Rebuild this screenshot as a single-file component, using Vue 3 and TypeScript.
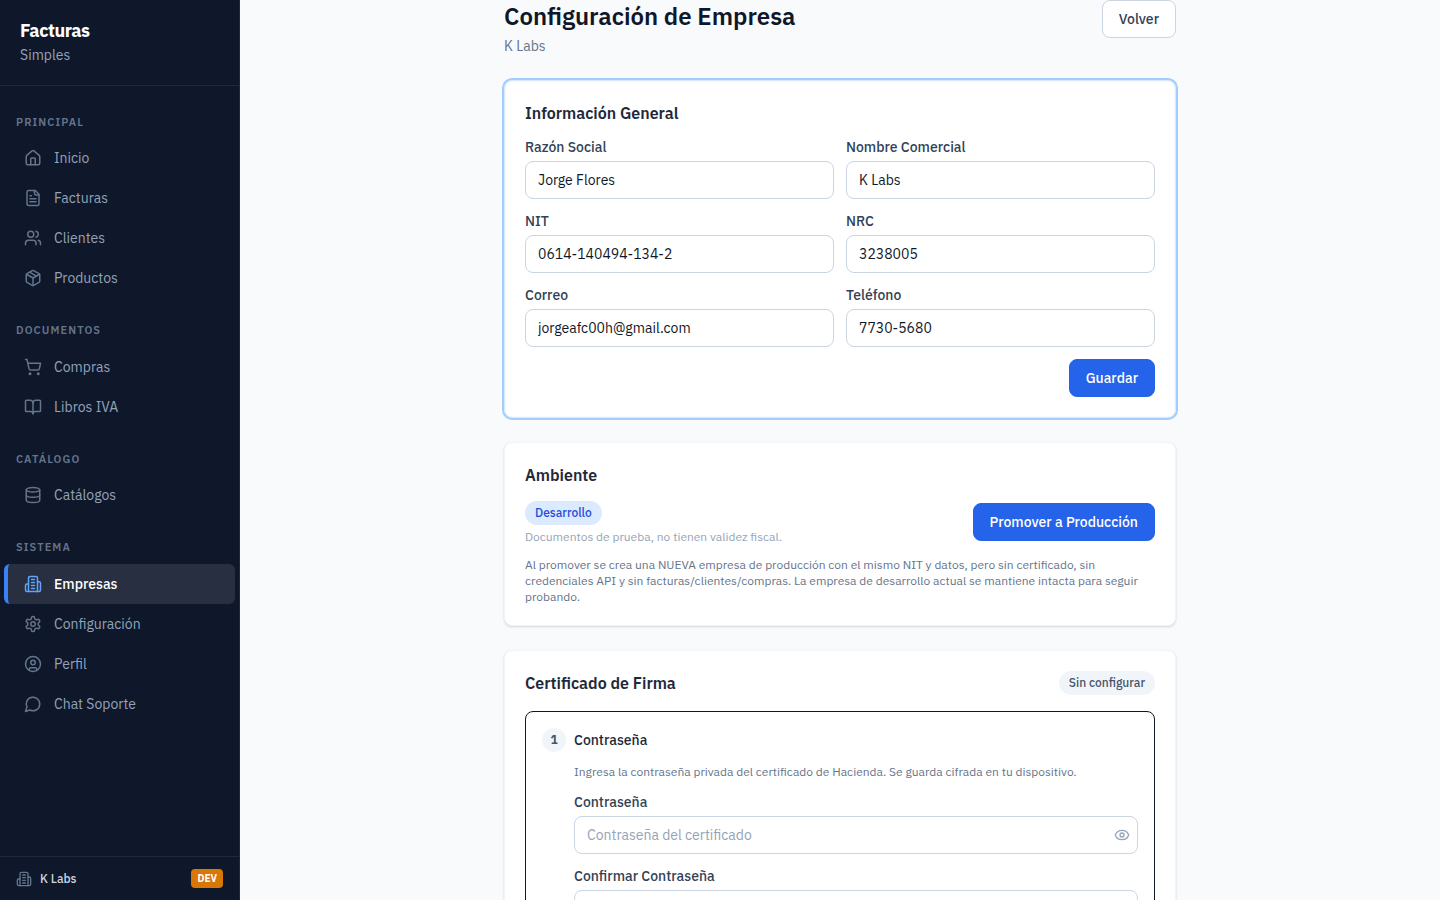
<script setup lang="ts">
import { ref } from 'vue'

interface NavItem {
  label: string
  icon: string
  active?: boolean
}
interface NavGroup {
  title: string
  items: NavItem[]
}

const icons: Record<string, string[]> = {
  home: [
    'M15 21v-8a1 1 0 0 0-1-1h-4a1 1 0 0 0-1 1v8',
    'M3 10a2 2 0 0 1 .709-1.528l7-5.999a2 2 0 0 1 2.582 0l7 5.999A2 2 0 0 1 21 10v9a2 2 0 0 1-2 2H5a2 2 0 0 1-2-2z',
  ],
  file: [
    'M15 2H6a2 2 0 0 0-2 2v16a2 2 0 0 0 2 2h12a2 2 0 0 0 2-2V7Z',
    'M14 2v4a2 2 0 0 0 2 2h4',
    'M10 9H8',
    'M16 13H8',
    'M16 17H8',
  ],
  users: [
    'M16 21v-2a4 4 0 0 0-4-4H6a4 4 0 0 0-4 4v2',
    'M5 7a4 4 0 1 0 8 0a4 4 0 1 0-8 0',
    'M22 21v-2a4 4 0 0 0-3-3.87',
    'M16 3.13a4 4 0 0 1 0 7.75',
  ],
  package: [
    'M11 21.73a2 2 0 0 0 2 0l7-4A2 2 0 0 0 21 16V8a2 2 0 0 0-1-1.73l-7-4a2 2 0 0 0-2 0l-7 4A2 2 0 0 0 3 8v8a2 2 0 0 0 1 1.73z',
    'M12 22V12',
    'M3.3 7 12 12l8.7-5',
    'M7.5 4.27l9 5.15',
  ],
  cart: [
    'M7 21a1 1 0 1 0 2 0a1 1 0 1 0-2 0',
    'M18 21a1 1 0 1 0 2 0a1 1 0 1 0-2 0',
    'M2.05 2.05h2l2.66 12.42a2 2 0 0 0 2 1.58h9.78a2 2 0 0 0 1.95-1.57l1.65-7.43H5.12',
  ],
  book: [
    'M12 7v14',
    'M3 18a1 1 0 0 1-1-1V4a1 1 0 0 1 1-1h5a4 4 0 0 1 4 4 4 4 0 0 1 4-4h5a1 1 0 0 1 1 1v13a1 1 0 0 1-1 1h-6a3 3 0 0 0-3 3 3 3 0 0 0-3-3z',
  ],
  database: [
    'M3 5a9 3 0 1 0 18 0a9 3 0 1 0-18 0',
    'M3 5v14a9 3 0 0 0 18 0V5',
    'M3 12a9 3 0 0 0 18 0',
  ],
  building: [
    'M6 22V4a2 2 0 0 1 2-2h8a2 2 0 0 1 2 2v18Z',
    'M6 12H4a2 2 0 0 0-2 2v6a2 2 0 0 0 2 2h2',
    'M18 9h2a2 2 0 0 1 2 2v9a2 2 0 0 1-2 2h-2',
    'M10 6h4',
    'M10 10h4',
    'M10 14h4',
    'M10 18h4',
  ],
  settings: [
    'M12.22 2h-.44a2 2 0 0 0-2 2v.18a2 2 0 0 1-1 1.73l-.43.25a2 2 0 0 1-2 0l-.15-.08a2 2 0 0 0-2.73.73l-.22.38a2 2 0 0 0 .73 2.73l.15.1a2 2 0 0 1 1 1.72v.51a2 2 0 0 1-1 1.74l-.15.09a2 2 0 0 0-.73 2.73l.22.38a2 2 0 0 0 2.73.73l.15-.08a2 2 0 0 1 2 0l.43.25a2 2 0 0 1 1 1.73V20a2 2 0 0 0 2 2h.44a2 2 0 0 0 2-2v-.18a2 2 0 0 1 1-1.73l.43-.25a2 2 0 0 1 2 0l.15.08a2 2 0 0 0 2.73-.73l.22-.39a2 2 0 0 0-.73-2.73l-.15-.08a2 2 0 0 1-1-1.74v-.5a2 2 0 0 1 1-1.74l.15-.09a2 2 0 0 0 .73-2.73l-.22-.38a2 2 0 0 0-2.73-.73l-.15.08a2 2 0 0 1-2 0l-.43-.25a2 2 0 0 1-1-1.73V4a2 2 0 0 0-2-2z',
    'M9 12a3 3 0 1 0 6 0a3 3 0 1 0-6 0',
  ],
  profile: [
    'M2 12a10 10 0 1 0 20 0a10 10 0 1 0-20 0',
    'M9 10a3 3 0 1 0 6 0a3 3 0 1 0-6 0',
    'M7 20.662V19a2 2 0 0 1 2-2h6a2 2 0 0 1 2 2v1.662',
  ],
  chat: ['M7.9 20A9 9 0 1 0 4 16.1L2 22Z'],
}

const groups: NavGroup[] = [
  {
    title: 'Principal',
    items: [
      { label: 'Inicio', icon: 'home' },
      { label: 'Facturas', icon: 'file' },
      { label: 'Clientes', icon: 'users' },
      { label: 'Productos', icon: 'package' },
    ],
  },
  {
    title: 'Documentos',
    items: [
      { label: 'Compras', icon: 'cart' },
      { label: 'Libros IVA', icon: 'book' },
    ],
  },
  { title: 'Catálogo', items: [{ label: 'Catálogos', icon: 'database' }] },
  {
    title: 'Sistema',
    items: [
      { label: 'Empresas', icon: 'building', active: true },
      { label: 'Configuración', icon: 'settings' },
      { label: 'Perfil', icon: 'profile' },
      { label: 'Chat Soporte', icon: 'chat' },
    ],
  },
]

const fields = ref([
  { id: 'razon', label: 'Razón Social', value: 'Jorge Flores', type: 'text' },
  { id: 'nombre', label: 'Nombre Comercial', value: 'K Labs', type: 'text' },
  { id: 'nit', label: 'NIT', value: '0614-140494-134-2', type: 'text' },
  { id: 'nrc', label: 'NRC', value: '3238005', type: 'text' },
  { id: 'correo', label: 'Correo', value: 'jorgeafc00h@gmail.com', type: 'email' },
  { id: 'telefono', label: 'Teléfono', value: '7730-5680', type: 'tel' },
])

const password = ref('')
const confirmation = ref('')
const showPassword = ref(false)
</script>

<template>
  <div class="app">
    <aside class="sidebar">
      <div class="brand">
        <div class="brand-name">Facturas</div>
        <div class="brand-sub">Simples</div>
      </div>
      <nav class="nav">
        <section v-for="group in groups" :key="group.title">
          <h2 class="nav-title">{{ group.title }}</h2>
          <a
            v-for="item in group.items"
            :key="item.label"
            href="#"
            class="nav-item"
            :class="{ active: item.active }"
          >
            <svg class="icon" viewBox="0 0 24 24" aria-hidden="true">
              <path v-for="d in icons[item.icon]" :key="d" :d="d" />
            </svg>
            <span>{{ item.label }}</span>
          </a>
        </section>
      </nav>
      <div class="company">
        <svg class="icon small" viewBox="0 0 24 24" aria-hidden="true">
          <path v-for="d in icons.building" :key="d" :d="d" />
        </svg>
        <span class="company-name">K Labs</span>
        <span class="env">DEV</span>
      </div>
    </aside>

    <main class="main">
      <div class="content">
        <header class="page-head">
          <div>
            <h1>Configuración de Empresa</h1>
            <p class="subtitle">K Labs</p>
          </div>
          <button type="button" class="btn secondary">Volver</button>
        </header>

        <form class="card highlighted" @submit.prevent>
          <h2 class="card-title">Información General</h2>
          <div class="grid">
            <div v-for="field in fields" :key="field.id" class="field">
              <label :for="field.id">{{ field.label }}</label>
              <input :id="field.id" v-model="field.value" :type="field.type" class="input" />
            </div>
          </div>
          <div class="actions">
            <button type="submit" class="btn primary">Guardar</button>
          </div>
        </form>

        <section class="card">
          <h2 class="card-title">Ambiente</h2>
          <div class="env-row">
            <div class="env-info">
              <span class="badge blue">Desarrollo</span>
              <p class="hint">Documentos de prueba, no tienen validez fiscal.</p>
            </div>
            <button type="button" class="btn primary">Promover a Producción</button>
          </div>
          <p class="note">
            Al promover se crea una NUEVA empresa de producción con el mismo NIT y datos, pero sin
            certificado, sin credenciales API y sin facturas/clientes/compras. La empresa de
            desarrollo actual se mantiene intacta para seguir probando.
          </p>
        </section>

        <section class="card">
          <div class="cert-head">
            <h2 class="card-title">Certificado de Firma</h2>
            <span class="badge gray">Sin configurar</span>
          </div>
          <form class="step" @submit.prevent>
            <div class="step-head">
              <span class="step-number">1</span>
              <h3>Contraseña</h3>
            </div>
            <div class="step-body">
              <p class="note">
                Ingresa la contraseña privada del certificado de Hacienda. Se guarda cifrada en tu
                dispositivo.
              </p>
              <div class="field">
                <label for="password">Contraseña</label>
                <div class="input-wrap">
                  <input
                    id="password"
                    v-model="password"
                    :type="showPassword ? 'text' : 'password'"
                    class="input"
                    placeholder="Contraseña del certificado"
                  />
                  <button
                    type="button"
                    class="eye"
                    aria-label="Mostrar contraseña"
                    @click="showPassword = !showPassword"
                  >
                    <svg viewBox="0 0 24 24" aria-hidden="true">
                      <path
                        d="M2.062 12.348a1 1 0 0 1 0-.696 10.75 10.75 0 0 1 19.876 0 1 1 0 0 1 0 .696 10.75 10.75 0 0 1-19.876 0"
                      />
                      <circle cx="12" cy="12" r="3" />
                    </svg>
                  </button>
                </div>
              </div>
              <div class="field">
                <label for="confirmation">Confirmar Contraseña</label>
                <input id="confirmation" v-model="confirmation" type="password" class="input" />
              </div>
            </div>
          </form>
        </section>
      </div>
    </main>
  </div>
</template>

<style>
body {
  margin: 0;
  background: #f8fafc;
}
</style>

<style scoped>
.app,
.app * {
  box-sizing: border-box;
}
.app {
  display: flex;
  height: 100vh;
  font-family: 'IBM Plex Sans', Roboto, 'Liberation Sans', sans-serif;
  font-size: 14px;
  line-height: 20px;
  color: #0f172a;
}
h1,
h2,
h3,
p {
  margin: 0;
}
button,
input {
  font: inherit;
}
.sidebar {
  display: flex;
  flex-direction: column;
  flex: 0 0 240px;
  background: #0f172a;
  border-right: 1px solid #1e293b;
}
.brand {
  padding: 20px 20px;
  border-bottom: 1px solid #1e293b;
}
.brand-name {
  font-size: 18px;
  line-height: 1.2;
  font-weight: 700;
  letter-spacing: -0.025em;
  color: #fff;
}
.brand-sub {
  margin-top: 3px;
  color: #94a3b8;
}
.nav {
  flex: 1;
  padding: 4px 4px;
  overflow: hidden;
}
.nav-title {
  padding: 24px 12px 8px;
  font-size: 11px;
  line-height: 1.5;
  font-weight: 600;
  letter-spacing: 0.1em;
  text-transform: uppercase;
  color: #64748b;
}
.nav-item {
  display: flex;
  align-items: center;
  gap: 12px;
  height: 40px;
  padding: 0 16px;
  border-left: 4px solid transparent;
  border-radius: 6px;
  color: #94a3b8;
  text-decoration: none;
}
.nav-item.active {
  border-left-color: #3b82f6;
  background: #282f40;
  color: #fff;
  font-weight: 500;
}
.icon {
  flex: none;
  width: 18px;
  height: 18px;
  fill: none;
  stroke: #64748b;
  stroke-width: 2;
  stroke-linecap: round;
  stroke-linejoin: round;
}
.active .icon {
  stroke: #60a5fa;
}
.icon.small {
  width: 16px;
  height: 16px;
}
.company {
  display: flex;
  align-items: center;
  gap: 8px;
  height: 44px;
  padding: 0 16px;
  border-top: 1px solid #1e293b;
  font-size: 12px;
  font-weight: 500;
  color: #cbd5e1;
}
.company-name {
  flex: 1;
}
.env {
  padding: 2px 6px;
  border-radius: 4px;
  background: #d97706;
  color: #fff;
  font-size: 10px;
  line-height: 15px;
  font-weight: 700;
}
.main {
  flex: 1;
  min-width: 0;
  overflow-y: auto;
  scrollbar-width: none;
  background: #f8fafc;
}
.content {
  display: flex;
  flex-direction: column;
  gap: 24px;
  max-width: 672px;
  margin: 0 auto;
  padding-bottom: 32px;
}
.page-head {
  display: flex;
  align-items: flex-start;
  justify-content: space-between;
}
h1 {
  font-size: 24px;
  line-height: 32px;
  font-weight: 600;
}
.subtitle {
  margin-top: 4px;
  color: #64748b;
}
.btn {
  height: 38px;
  padding: 0 16px;
  border: 1px solid transparent;
  border-radius: 8px;
  font-weight: 500;
  white-space: nowrap;
  cursor: pointer;
}
.btn.secondary {
  border-color: #cbd5e1;
  background: #fff;
  color: #334155;
}
.btn.primary {
  background: #2563eb;
  border-color: #2563eb;
  color: #fff;
}
.card {
  padding: 20px;
  border: 1px solid #f1f5f9;
  border-radius: 8px;
  background: #fff;
  box-shadow: 0 1px 3px rgba(0, 0, 0, 0.1), 0 1px 2px rgba(0, 0, 0, 0.06);
}
.card.highlighted {
  border-color: #dbeafe;
  box-shadow: 0 0 0 2px #a3cdfd, inset 0 0 2px #dbeafe;
}
.card-title {
  font-size: 16px;
  line-height: 24px;
  font-weight: 600;
  color: #1e293b;
}
.grid {
  display: grid;
  grid-template-columns: 1fr 1fr;
  gap: 12px;
  margin-top: 12px;
}
.field {
  display: flex;
  flex-direction: column;
  gap: 4px;
}
label {
  font-weight: 500;
  color: #334155;
}
.input {
  width: 100%;
  height: 38px;
  padding: 0 12px;
  border: 1px solid #cbd5e1;
  border-radius: 8px;
  background: #fff;
  color: #0f172a;
  outline: none;
}
.input::placeholder {
  color: #94a3b8;
  opacity: 1;
}
.actions {
  display: flex;
  justify-content: flex-end;
  margin-top: 12px;
}
.env-row {
  display: flex;
  align-items: center;
  justify-content: space-between;
  margin: 12px 0;
}
.env-info {
  padding-top: 2px;
}
.badge {
  display: inline-block;
  padding: 4px 10px;
  border-radius: 12px;
  font-size: 12px;
  line-height: 16px;
  font-weight: 500;
}
.badge.blue {
  background: #dbeafe;
  color: #1d4ed8;
}
.badge.gray {
  background: #f1f5f9;
  color: #475569;
}
.env-info .badge {
  display: block;
  width: fit-content;
}
.hint {
  margin-top: 4px;
  font-size: 12px;
  line-height: 16px;
  color: #94a3b8;
}
.note {
  font-size: 12px;
  line-height: 16px;
  color: #64748b;
}
.cert-head {
  display: flex;
  align-items: center;
  justify-content: space-between;
  margin-bottom: 16px;
}
.step {
  padding: 16px;
  border: 1px solid #0f172a;
  border-radius: 8px;
}
.step-head {
  display: flex;
  align-items: center;
  gap: 8px;
}
.step-head h3 {
  font-size: 14px;
  font-weight: 500;
  color: #1e293b;
}
.step-number {
  width: 24px;
  height: 24px;
  border-radius: 50%;
  background: #f1f5f9;
  color: #475569;
  font-size: 12px;
  line-height: 24px;
  font-weight: 700;
  text-align: center;
}
.step-body {
  display: flex;
  flex-direction: column;
  gap: 12px;
  margin-top: 12px;
  padding-left: 32px;
}
.input-wrap {
  position: relative;
}
.input-wrap .input {
  padding-right: 40px;
}
.eye {
  position: absolute;
  top: 0;
  right: 8px;
  display: flex;
  align-items: center;
  height: 100%;
  padding: 0;
  border: 0;
  background: none;
  cursor: pointer;
}
.eye svg {
  width: 16px;
  height: 16px;
  fill: none;
  stroke: #94a3b8;
  stroke-width: 2;
  stroke-linecap: round;
  stroke-linejoin: round;
}
</style>
